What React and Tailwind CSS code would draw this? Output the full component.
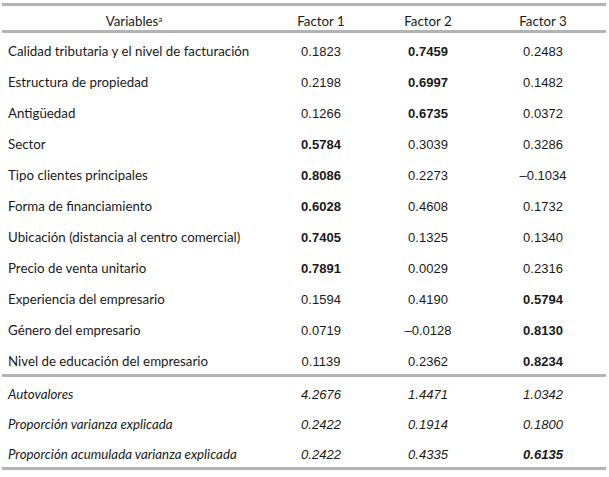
import React from 'react';

const rows = [
  ['Calidad tributaria y el nivel de facturación', '0.1823', '0.7459', '0.2483', 2],
  ['Estructura de propiedad', '0.2198', '0.6997', '0.1482', 2],
  ['Antigüedad', '0.1266', '0.6735', '0.0372', 2],
  ['Sector', '0.5784', '0.3039', '0.3286', 1],
  ['Tipo clientes principales', '0.8086', '0.2273', '–0.1034', 1],
  ['Forma de financiamiento', '0.6028', '0.4608', '0.1732', 1],
  ['Ubicación (distancia al centro comercial)', '0.7405', '0.1325', '0.1340', 1],
  ['Precio de venta unitario', '0.7891', '0.0029', '0.2316', 1],
  ['Experiencia del empresario', '0.1594', '0.4190', '0.5794', 3],
  ['Género del empresario', '0.0719', '–0.0128', '0.8130', 3],
  ['Nivel de educación del empresario', '0.1139', '0.2362', '0.8234', 3],
];

const totals = [
  ['Autovalores', '4.2676', '1.4471', '1.0342', 0],
  ['Proporción varianza explicada', '0.2422', '0.1914', '0.1800', 0],
  ['Proporción acumulada varianza explicada', '0.2422', '0.4335', '0.6135', 3],
];

const label = "font-['Lato','Noto_Sans',sans-serif]";
const num = "font-['Liberation_Sans',Arial,sans-serif]";
const grid = 'grid grid-cols-[264px_110px_104px_126px] items-center';

function Row({ r, italic, h }) {
  return (
    <div className={`${grid} ${h} ${italic ? 'italic' : ''}`}>
      <div className={`${label} pl-[6px] text-[13.3px] text-[#1a1a1a]`}>{r[0]}</div>
      {[1, 2, 3].map((i) => (
        <div
          key={i}
          className={`${num} text-center text-[13px] text-[#1a1a1a] ${r[4] === i ? 'font-bold' : ''}`}
        >
          {r[i]}
        </div>
      ))}
    </div>
  );
}

export default function App() {
  return (
    <div className="w-[609px] h-[477px] bg-white">
      <div className="ml-[2px] mt-[3px] w-[604px] border-t-[3px] border-b-[3px] border-[#b3b3b3]">
        <div className={`${grid} h-[27px] pt-[6px] border-b-[3px] border-[#b3b3b3] ${label} text-[13.3px] text-[#1a1a1a]`}>
          <div className="text-center">
            Variables<sup className="text-[8px]">a</sup>
          </div>
          <div className="text-center">Factor 1</div>
          <div className="text-center">Factor 2</div>
          <div className="text-center">Factor 3</div>
        </div>
        <div className="border-b-[3px] border-[#b3b3b3]">
          {rows.map((r) => (
            <Row key={r[0]} r={r} h="h-[31px] pt-[7px]" />
          ))}
        </div>
        {totals.map((r) => (
          <Row key={r[0]} r={r} italic h="h-[30px] pt-[5px]" />
        ))}
      </div>
    </div>
  );
}
